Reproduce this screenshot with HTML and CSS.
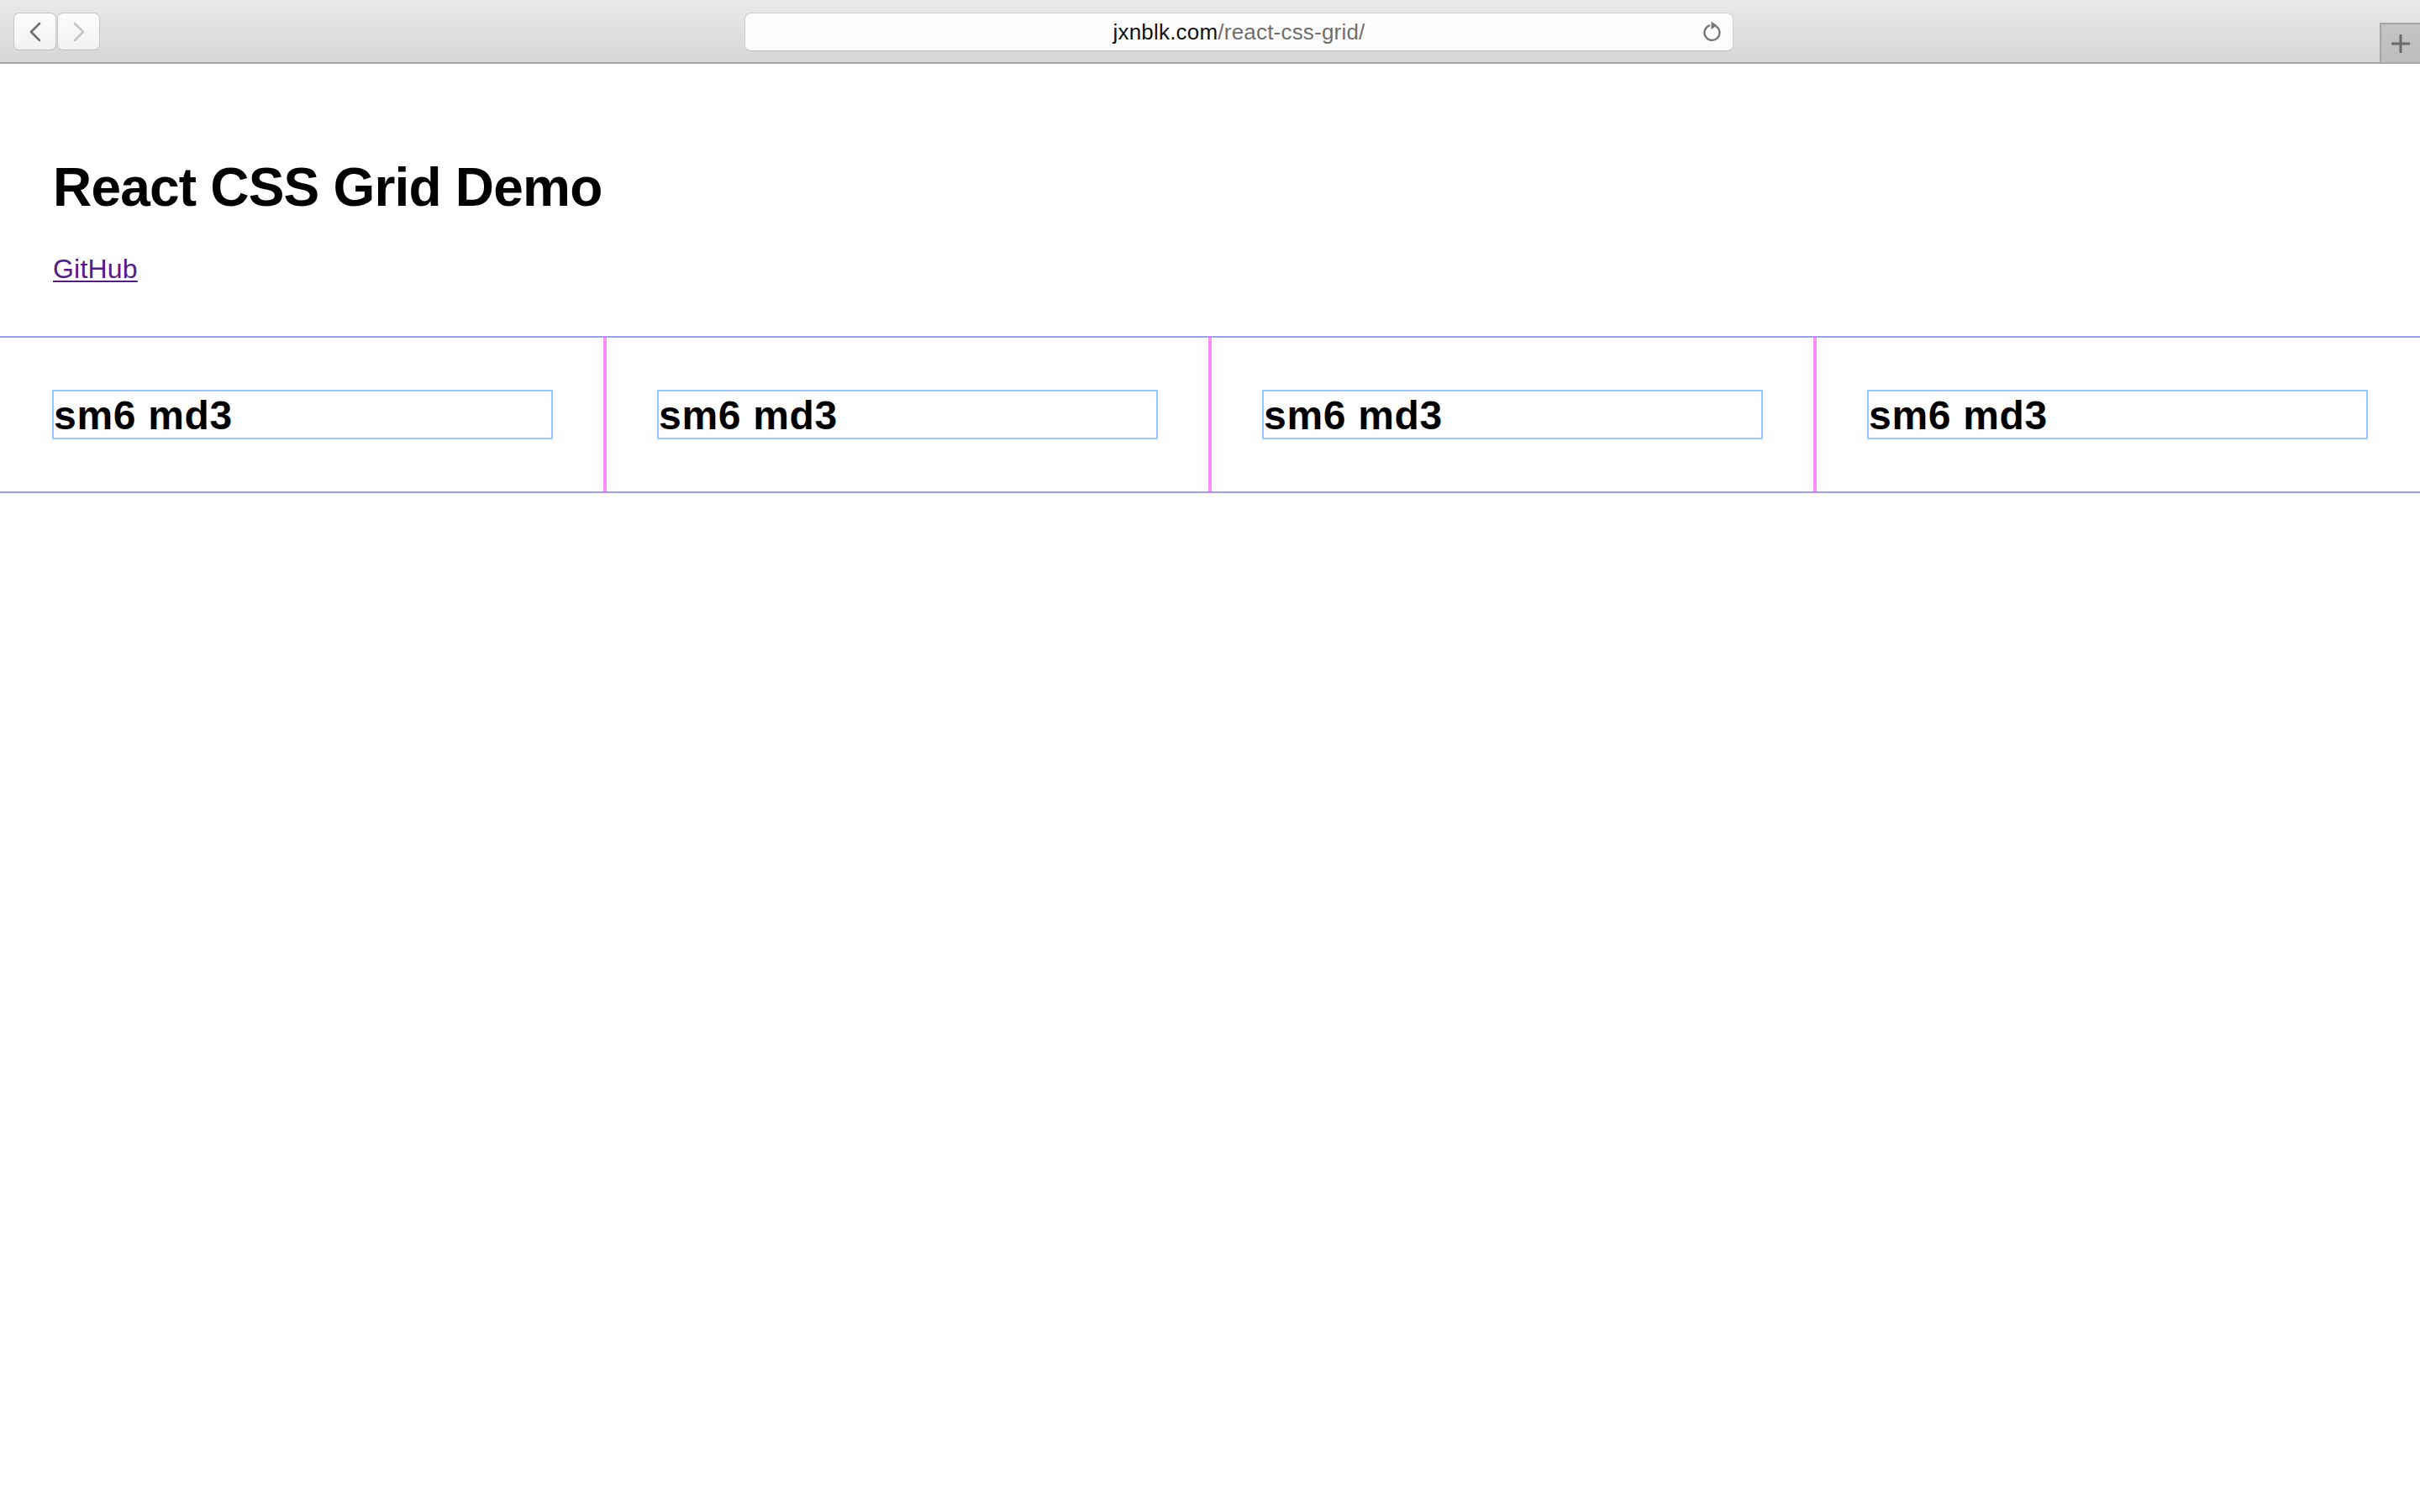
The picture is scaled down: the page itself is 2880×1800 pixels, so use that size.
FILE: index.html
```html
<!DOCTYPE html>
<html lang="en">
<head>
<meta charset="utf-8">
<title>React CSS Grid Demo</title>
<link rel="stylesheet" href="styles.css">
</head>
<body>
<div class="toolbar">
  <div class="nav">
    <div class="nav-btn">
      <svg width="16" height="24" viewBox="0 0 16 24"><path d="M13 2 L3 12 L13 22" fill="none" stroke="#707070" stroke-width="2.6" stroke-linecap="round" stroke-linejoin="round"/></svg>
    </div>
    <div class="nav-btn">
      <svg width="16" height="24" viewBox="0 0 16 24"><path d="M3 2 L13 12 L3 22" fill="none" stroke="#c4c4c4" stroke-width="2.6" stroke-linecap="round" stroke-linejoin="round"/></svg>
    </div>
  </div>
  <div class="address">
    <span class="url"><span class="host">jxnblk.com</span><span class="path">/react-css-grid/</span></span>
    <svg class="reload" width="24" height="28" viewBox="0 0 24 28"><path d="M16.2 8.2 A9 9 0 1 1 9 7.2" fill="none" stroke="#767676" stroke-width="2.4"/><path d="M10.5 2.5 L17.5 7.2 L10.5 11.9 Z" fill="#767676"/></svg>
  </div>
  <div class="newtab">
    <svg width="24" height="24" viewBox="0 0 24 24"><path d="M12 1 V23 M1 12 H23" stroke="#6b6b6b" stroke-width="3"/></svg>
  </div>
</div>
<main class="page">
  <header class="header">
    <h1 class="title">React CSS Grid Demo</h1>
    <a class="link" href="#github">GitHub</a>
  </header>
  <section class="grid">
    <div class="col"><div class="box"><h2 class="label">sm6 md3</h2></div></div>
    <div class="col"><div class="box"><h2 class="label">sm6 md3</h2></div></div>
    <div class="col"><div class="box"><h2 class="label">sm6 md3</h2></div></div>
    <div class="col"><div class="box"><h2 class="label">sm6 md3</h2></div></div>
  </section>
</main>
</body>
</html>
```

FILE: styles.css
```css
* { box-sizing: border-box; }
html, body { margin: 0; padding: 0; background: #fff; }
body { font-family: "Liberation Sans", Arial, Helvetica, sans-serif; color: #000; }

.toolbar {
  display: flex;
  align-items: flex-start;
  height: 76px;
  background: linear-gradient(#e9e9e9, #d6d6d6);
  border-bottom: 2px solid #a6a6a6;
}
.nav {
  display: flex;
  gap: 1px;
  margin: 15px 0 0 16px;
}
.nav-btn {
  width: 51px;
  height: 45px;
  display: flex;
  align-items: center;
  justify-content: center;
  background: linear-gradient(#fcfcfc, #f2f2f2);
  border: 1px solid #c6c6c6;
  border-bottom-color: #b8b8b8;
  border-radius: 7px;
}
.address {
  position: relative;
  width: 1177px;
  height: 46px;
  margin: 15px 0 0 767px;
  display: flex;
  align-items: center;
  justify-content: center;
  background: #fdfdfd;
  border: 1px solid #cfcfcf;
  border-bottom-color: #bdbdbd;
  border-radius: 8px;
}
.url { font-size: 26px; letter-spacing: 0.2px; }
.host { color: #111; }
.path { color: #6e6e6e; }
.reload { position: absolute; right: 12px; top: 7px; }
.newtab {
  margin-left: auto;
  align-self: flex-end;
  width: 48px;
  height: 47px;
  display: flex;
  align-items: center;
  justify-content: center;
  background: linear-gradient(#c4c4c4, #bdbdbd);
  border-top: 2px solid #a4a4a4;
  border-left: 2px solid #a4a4a4;
}

.header { padding: 110px 64px 0 63px; }
.title {
  margin: 0;
  font-size: 64px;
  font-weight: 700;
  line-height: 74px;
  letter-spacing: -0.8px;
}
.link {
  display: inline-block;
  margin-top: 42px;
  font-size: 32px;
  line-height: 37px;
  color: #551a8b;
  text-decoration: underline;
  text-underline-offset: 3px;
  text-decoration-thickness: 2px;
  letter-spacing: 0.2px;
}

.grid {
  display: grid;
  grid-template-columns: repeat(4, 1fr);
  margin-top: 61px;
  border-top: 2px solid #9c9cff;
  border-bottom: 2px solid #9c9cff;
}
.col {
  padding: 62px 60px;
  border-left: 2px solid #ff8cff;
  border-right: 2px solid #ff8cff;
}
.col:first-child {
  border-left: 0;
  padding-left: 62px;
}
.col:last-child {
  border-right: 0;
  padding-right: 62px;
}
.box {
  border: 2px solid #98c6ff;
}
.label {
  margin: 0;
  padding-top: 2px;
  font-size: 48px;
  font-weight: 700;
  line-height: 53px;
  letter-spacing: 0.7px;
}
```
